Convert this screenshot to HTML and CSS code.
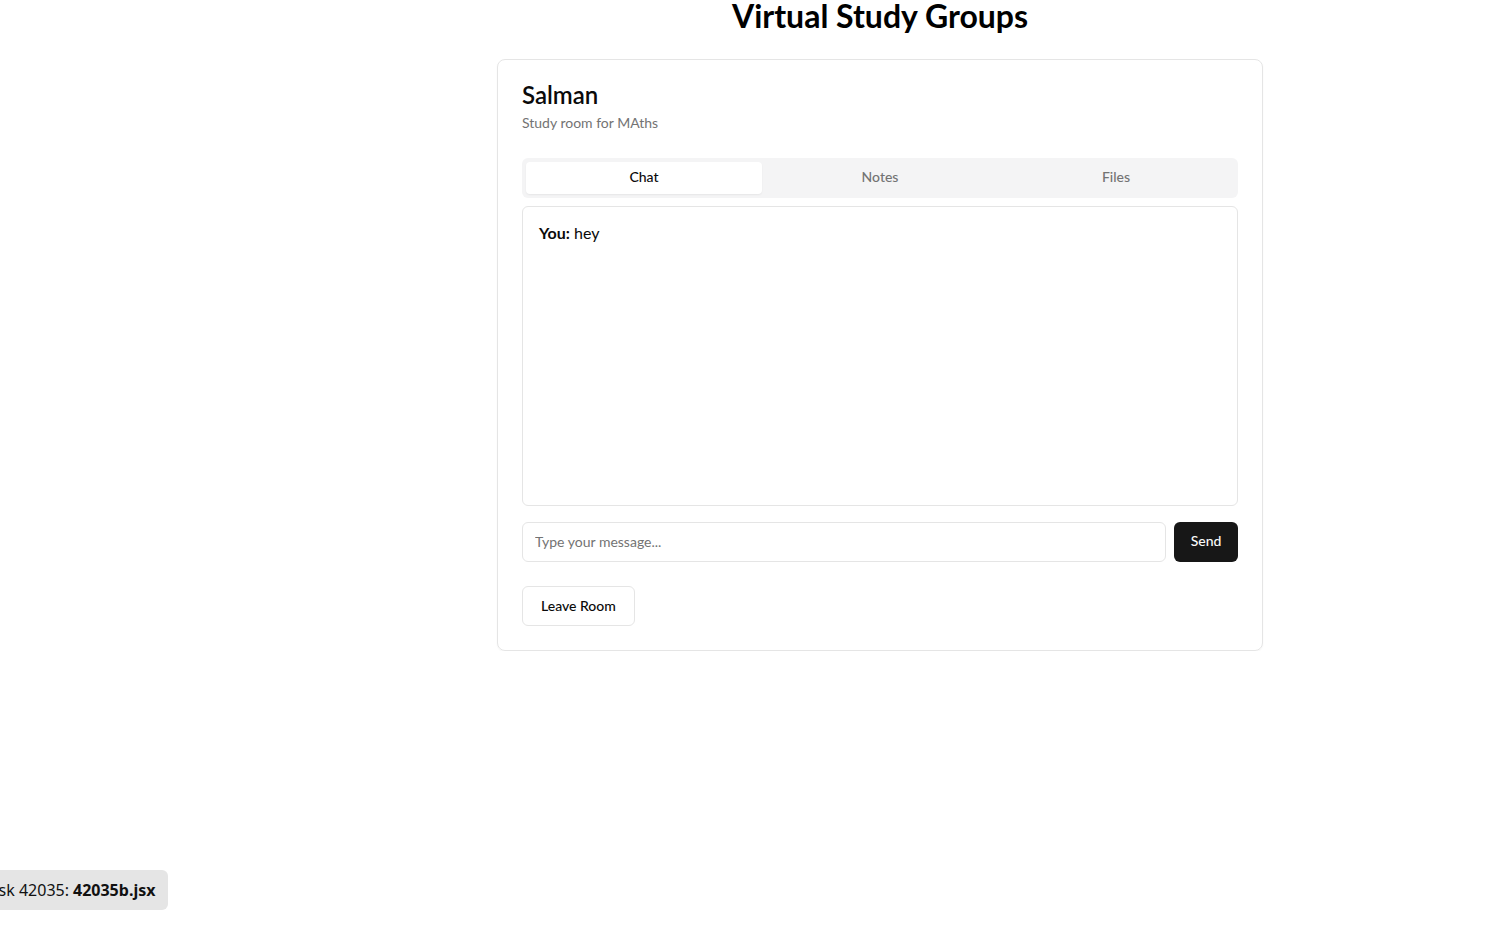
FILE: index.html
```html
<!DOCTYPE html>
<html lang="en">
<head>
<meta charset="utf-8">
<title>Virtual Study Groups</title>
<link rel="stylesheet" href="styles.css">
</head>
<body>
<main class="page">
  <h1 class="title">Virtual Study Groups</h1>
  <section class="card">
    <header class="card-head">
      <h2 class="room-name">Salman</h2>
      <p class="room-desc">Study room for MAths</p>
    </header>
    <div class="tabs">
      <button class="tab active">Chat</button>
      <button class="tab">Notes</button>
      <button class="tab">Files</button>
    </div>
    <div class="chat-box">
      <p class="msg"><strong>You:</strong> hey</p>
    </div>
    <form class="composer">
      <input class="input" type="text" placeholder="Type your message...">
      <button class="btn-send" type="button">Send</button>
    </form>
    <div class="actions">
      <button class="btn-outline" type="button">Leave Room</button>
    </div>
  </section>
</main>
<div class="task-badge">Task 42035: <b>42035b.jsx</b></div>
</body>
</html>
```
FILE: styles.css
```css
* { box-sizing: border-box; }
html, body { margin: 0; padding: 0; background: #fff; }
body {
  font-family: Lato, "Noto Sans", sans-serif;
  color: #0a0a0a;
}
.page {
  display: flex;
  flex-direction: column;
  align-items: center;
  padding-left: 248px;
}
.title {
  font-size: 32px;
  font-weight: 700;
  line-height: 32px;
  margin: 0 0 27px;
  color: #000;
}
.card {
  width: 766px;
  border: 1px solid #e5e5e5;
  border-radius: 8px;
  padding: 23px 24px 24px;
  box-shadow: 0 1px 2px rgba(0,0,0,0.04);
  display: flex;
  flex-direction: column;
}
.card-head { margin-bottom: 25px; }
.room-name {
  font-size: 24px;
  font-weight: 600;
  line-height: 24px;
  margin: 0;
}
.room-desc {
  font-size: 14px;
  line-height: 20px;
  color: #737373;
  margin: 6px 0 0;
}
.tabs {
  display: grid;
  grid-template-columns: 1fr 1fr 1fr;
  background: #f4f4f5;
  border-radius: 6px;
  padding: 4px;
  height: 40px;
  margin-bottom: 8px;
}
.tab {
  border: 0;
  background: transparent;
  font-family: inherit;
  font-size: 14px;
  font-weight: 500;
  color: #737373;
  border-radius: 4px;
  padding: 0 0 3px;
}
.tab.active {
  background: #fff;
  color: #0a0a0a;
  box-shadow: 0 1px 2px rgba(0,0,0,0.06);
}
.chat-box {
  height: 300px;
  border: 1px solid #e5e5e5;
  border-radius: 6px;
  padding: 14px 16px 16px;
  margin-bottom: 16px;
}
.msg {
  margin: 0;
  font-size: 16px;
  line-height: 24px;
}
.msg strong { font-weight: 700; }
.composer {
  display: flex;
  gap: 8px;
  margin: 0 0 24px;
}
.input {
  flex: 1;
  height: 40px;
  border: 1px solid #e5e5e5;
  border-radius: 6px;
  padding: 0 12px 2px;
  font-family: inherit;
  font-size: 14px;
  color: #0a0a0a;
  outline: none;
}
.input::placeholder { color: #737373; }
.btn-send {
  width: 64px;
  height: 40px;
  border: 0;
  border-radius: 6px;
  background: #171717;
  color: #fafafa;
  font-family: inherit;
  font-size: 14px;
  font-weight: 500;
  padding: 0 0 3px;
}
.actions { display: flex; }
.btn-outline {
  height: 40px;
  padding: 0 18px 2px;
  border: 1px solid #e5e5e5;
  border-radius: 6px;
  background: #fff;
  color: #0a0a0a;
  font-family: inherit;
  font-size: 14px;
  font-weight: 500;
}
.task-badge {
  position: fixed;
  left: -34px;
  bottom: 17px;
  height: 40px;
  display: flex;
  align-items: center;
  padding: 0 13px 0 16px;
  background: #e5e5e5;
  border-radius: 0 6px 6px 0;
  font-family: "Noto Sans", sans-serif;
  font-size: 16px;
  color: #111;
}
.task-badge b { font-weight: 700; margin-left: 4px; }
```
